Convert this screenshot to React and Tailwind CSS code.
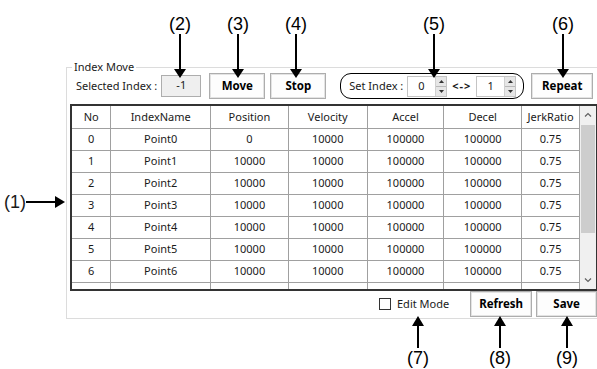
import React from 'react';

const cols = [
  { key: 'no', label: 'No', w: 'w-[39px]' },
  { key: 'name', label: 'IndexName', w: 'w-[100px]' },
  { key: 'pos', label: 'Position', w: 'w-[78px]' },
  { key: 'vel', label: 'Velocity', w: 'w-[79px]' },
  { key: 'acc', label: 'Accel', w: 'w-[77px]' },
  { key: 'dec', label: 'Decel', w: 'w-[78px]' },
  { key: 'jerk', label: 'JerkRatio', w: 'w-[58px]' },
];

const rows = Array.from({ length: 7 }, (_, i) => ({
  no: i,
  name: `Point${i}`,
  pos: i === 0 ? 0 : 10000,
  vel: 10000,
  acc: 100000,
  dec: 100000,
  jerk: '0.75',
}));

// callout label with a vertical arrow
const DownCallout = ({ label, x }) => (
  <div className="absolute top-[14px] flex flex-col items-center" style={{ left: x - 20 }}>
    <span className="w-[40px] text-center text-[18px] leading-[20px] text-black">{label}</span>
    <div className="h-[35px] w-[1.5px] bg-black" />
    <svg width="12" height="9" viewBox="0 0 12 9"><path d="M0 0 L12 0 L6 9 Z" fill="black" /></svg>
  </div>
);

const UpCallout = ({ label, x }) => (
  <div className="absolute top-[316px] flex flex-col items-center" style={{ left: x - 20 }}>
    <svg width="12" height="10" viewBox="0 0 12 10"><path d="M6 0 L12 10 L0 10 Z" fill="black" /></svg>
    <div className="h-[22px] w-[1.5px] bg-black" />
    <span className="w-[40px] text-center text-[18px] leading-[20px] text-black">{label}</span>
  </div>
);

const WinButton = ({ children, className }) => (
  <button className={`flex h-[26px] items-center justify-center border border-[#adadad] bg-[#fdfdfd] text-[11.5px] font-bold text-black shadow-[inset_0_0_0_1px_#e3e3e3] ${className}`}>
    {children}
  </button>
);

const Spinner = ({ value }) => (
  <div className="flex h-[21px] w-[40px] border border-[#c4c4c4] bg-white">
    <span className="flex-1 pl-[10px] text-[11px] leading-[18px]">{value}</span>
    <div className="flex w-[11px] flex-col border-l border-[#d0d0d0] bg-[#e6e6e6]">
      <div className="flex flex-1 items-center justify-center border-b border-[#b8b8b8]">
        <svg width="5" height="3" viewBox="0 0 5 3"><path d="M0 3 L2.5 0 L5 3 Z" fill="#333" /></svg>
      </div>
      <div className="flex flex-1 items-center justify-center">
        <svg width="5" height="3" viewBox="0 0 5 3"><path d="M0 0 L5 0 L2.5 3 Z" fill="#333" /></svg>
      </div>
    </div>
  </div>
);

export default function App() {
  return (
    <div className="relative h-[369px] w-[597px] overflow-hidden whitespace-nowrap bg-white font-['Noto_Sans',sans-serif] text-[#1a1a1a]">
      {/* group box */}
      <div className="relative ml-[66px] mt-[67px] w-[536px] border border-[#dcdcdc] pb-[2px] pl-[3px]">
        <span className="absolute -top-[8px] left-[5px] bg-white px-[2px] text-[11px] leading-[14px]">Index Move</span>

        <div className="mt-[5px] flex h-[26px] items-center">
          <span className="ml-[6px] text-[11px]">Selected Index :</span>
          <div className="ml-[4px] flex h-[22px] w-[40px] justify-center border border-[#adadad] bg-[#efefef] text-[11px] leading-[17px]">-1</div>
          <WinButton className="ml-[8px] w-[56px]">Move</WinButton>
          <WinButton className="ml-[5px] w-[56px]">Stop</WinButton>
          <div className="ml-[14px] flex h-[26px] w-[184px] items-center rounded-[11px] border-[1.5px] border-black pl-[8px]">
            <span className="text-[11px]">Set Index :</span>
            <div className="ml-[4px]"><Spinner value="0" /></div>
            <span className="mx-[5px] text-[11px] font-bold tracking-[1px]">{'<->'}</span>
            <Spinner value="1" />
          </div>
          <WinButton className="ml-[7px] w-[62px]">Repeat</WinButton>
        </div>

        {/* grid */}
        <div className="mt-[5px] flex h-[187px] w-[527px] overflow-hidden border-b-2 border-l-2 border-r border-t-2 border-[#333]">
          <div className="h-full w-[509px] overflow-hidden">
            <table className="table-fixed border-collapse text-[11px]">
              <thead>
                <tr className="h-[22px]">
                  {cols.map((c) => (
                    <th key={c.key} className={`${c.w} border-b border-r border-[#a0a0a0] p-0 text-center font-normal`}>{c.label}</th>
                  ))}
                </tr>
              </thead>
              <tbody>
                {rows.map((r) => (
                  <tr key={r.no} className="h-[22px]">
                    {cols.map((c) => (
                      <td key={c.key} className="border-b border-r border-[#a0a0a0] p-0 text-center">{r[c.key]}</td>
                    ))}
                  </tr>
                ))}
                <tr className="h-[22px]">
                  {cols.map((c) => (
                    <td key={c.key} className="border-b border-r border-[#a0a0a0] p-0" />
                  ))}
                </tr>
              </tbody>
            </table>
          </div>
          <div className="flex w-[16px] flex-col bg-[#f0f0f0]">
            <div className="flex h-[17px] items-center justify-center">
              <svg width="8" height="5" viewBox="0 0 8 5"><path d="M1 4.5 L4 1.5 L7 4.5" stroke="#606060" strokeWidth="1.2" fill="none" /></svg>
            </div>
            <div className="mx-[1px] mt-[2px] h-[108px] bg-[#cdcdcd]" />
            <div className="flex-1" />
            <div className="flex h-[17px] items-center justify-center">
              <svg width="8" height="5" viewBox="0 0 8 5"><path d="M1 0.5 L4 3.5 L7 0.5" stroke="#606060" strokeWidth="1.2" fill="none" /></svg>
            </div>
          </div>
        </div>

        <div className="mt-[1px] flex h-[24px] items-center">
          <div className="ml-[309px] h-[12px] w-[12px] border border-[#333] bg-white" />
          <span className="ml-[6px] text-[11px]">Edit Mode</span>
          <WinButton className="ml-[21px] h-[24px] w-[62px]">Refresh</WinButton>
          <WinButton className="ml-[4px] h-[24px] w-[61px]">Save</WinButton>
        </div>
      </div>

      {/* callouts */}
      <div className="font-['Liberation_Sans',sans-serif]">
        <DownCallout label="(2)" x={180} />
        <DownCallout label="(3)" x={238} />
        <DownCallout label="(4)" x={296} />
        <DownCallout label="(5)" x={434} />
        <DownCallout label="(6)" x={563} />
        <UpCallout label="(7)" x={418} />
        <UpCallout label="(8)" x={500} />
        <UpCallout label="(9)" x={567} />
        <div className="absolute left-[4px] top-[192px] flex items-center">
          <span className="text-[18px] leading-[20px]">(1)</span>
          <div className="h-[1.5px] w-[29px] bg-black" />
          <svg width="10" height="12" viewBox="0 0 10 12"><path d="M0 0 L10 6 L0 12 Z" fill="black" /></svg>
        </div>
      </div>
    </div>
  );
}
